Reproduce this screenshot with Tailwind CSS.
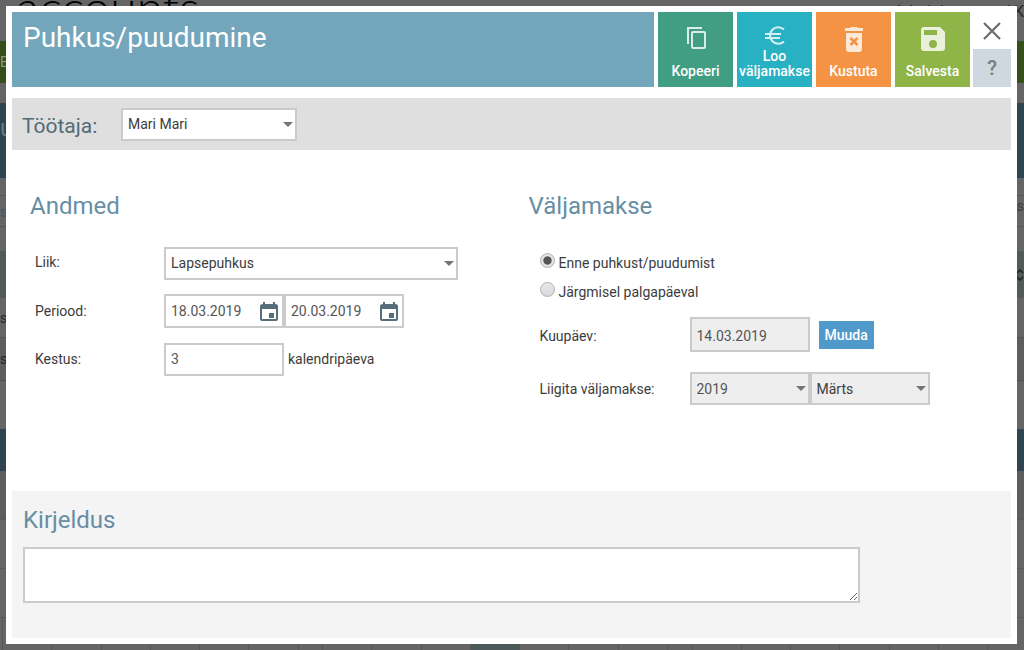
<!DOCTYPE html>
<html lang="et">
<head>
<meta charset="utf-8">
<meta name="viewport" content="width=device-width, initial-scale=1">
<title>Puhkus/puudumine</title>
<script src="https://cdn.jsdelivr.net/npm/@tailwindcss/browser@4"></script>
</head>
<body class="relative min-h-screen overflow-hidden bg-[#656565] font-['Roboto',sans-serif] text-sm text-[#3c3c3c]">

<!-- Dimmed page behind the dialog -->
<div aria-hidden="true" class="absolute inset-0 flex flex-col overflow-hidden text-[#262626]">
  <div class="flex h-[41px] shrink-0 justify-between">
    <div class="-mt-[18px] pl-4 font-['Lato',sans-serif] text-[48px] leading-[50px] font-light text-black">accounts</div>
    <div class="text-base leading-6">Administraator / K</div>
  </div>
  <div class="h-[42px] shrink-0 bg-[#35501b] leading-[42px] text-[#8b9a7c]">E</div>
  <div class="h-5 shrink-0"></div>
  <div class="h-[75px] shrink-0 bg-[#30444f] text-2xl leading-[50px] text-[#607e8c]">u</div>
  <div class="h-[17px] shrink-0"></div>
  <div class="flex h-8 shrink-0 justify-between border-y border-[#555]"><span class="leading-8 text-[#3c5a70]">s</span><span class="leading-5 text-[#3e3e3e]">s</span></div>
  <div class="h-6 shrink-0"></div>
  <div class="flex h-[47px] shrink-0 items-center justify-end bg-[#515a5b]">
    <svg class="h-3 w-2" viewBox="0 0 8 12" fill="none" stroke="#222" stroke-width="1.5"><path d="M1 4l3-3 3 3M1 8l3 3 3-3"/></svg>
  </div>
  <div class="h-10 shrink-0 border-b border-[#535353] leading-10">s</div>
  <div class="h-[43px] shrink-0 border-b border-[#505050] bg-[#5e5e5e] leading-[43px]">s</div>
  <div class="h-12 shrink-0"></div>
  <div class="h-[42px] shrink-0 bg-[#30444f]"></div>
  <div class="h-[49px] shrink-0 border-b border-[#585858] bg-[#5d5d5d]"></div>
  <div class="h-[49px] shrink-0 border-b border-[#595959]"></div>
  <div class="h-[49px] shrink-0 border-b border-[#595959]"></div>
  <div class="grid min-h-8 grow grid-cols-[3px_2fr_2fr_2fr_2fr_2fr_2fr_1fr_2fr_2fr_2fr_2fr_2fr_2fr_2fr_1fr_2fr_2fr_2fr_2fr_2fr_2fr_36px] divide-x divide-[#585858]">
    <i></i><i></i><i></i><i></i><i></i><i></i><i></i><i></i><i></i><i></i><i></i><i class="bg-[#4c5a5c]"></i><i></i><i></i><i></i><i></i><i></i><i></i><i></i><i></i><i></i><i></i><i></i>
  </div>
</div>

<main role="dialog" aria-labelledby="title" class="relative mt-[6px] mr-[7px] mb-[6px] ml-[6px] flex min-h-[calc(100vh-12px)] flex-col bg-white p-[6px]">
  <header class="flex min-h-[75px] gap-[3px]">
    <div class="flex grow gap-1">
      <h1 id="title" class="grow bg-[#73a6bb] px-[11px] pt-2 text-[28px] leading-9 text-white">Puhkus/puudumine</h1>
      <button class="flex w-[75px] flex-col items-center justify-between bg-[#429e83] pt-[11px] pb-2 text-sm leading-[15px] font-medium text-white">
        <svg class="size-8" viewBox="0 0 32 32" fill="none" stroke="#d9ece6" stroke-width="2"><path d="M8 21V5h14"/><rect x="12" y="9" width="13" height="16" rx="1"/></svg>
        Kopeeri
      </button>
      <button class="flex w-[75px] flex-col items-center justify-between bg-[#28b0c3] pt-[11px] pb-2 text-sm leading-[15px] font-medium text-white">
        <svg class="h-6 w-8" viewBox="0 0 32 24" fill="none" stroke="#d4eff3" stroke-width="2"><path d="M25 6.500A8.300 8.300 0 1 0 25 18.500M6 11h16M6 15h15"/></svg>
        <span>Loo<br>väljamakse</span>
      </button>
      <button class="flex w-[75px] flex-col items-center justify-between bg-[#f59345] pt-[11px] pb-2 text-sm leading-[15px] font-medium text-white">
        <svg class="size-8" viewBox="0 0 32 32"><path fill="#fde9da" d="M7 5h5l1-1h6l1 1h5v3H7zM8 10h16v16q0 3-3 3H11q-3 0-3-3z"/><path d="M12.500 15l7 7M19.500 15l-7 7" stroke="#f59345" stroke-width="2.500"/></svg>
        Kustuta
      </button>
      <button class="flex w-[75px] flex-col items-center justify-between bg-[#8fb549] pt-[11px] pb-2 text-sm leading-[15px] font-medium text-white">
        <svg class="size-8" viewBox="0 0 32 32"><path fill="#e9f0db" fill-rule="evenodd" d="M7 4h16l5 5v16q0 3-3 3H7q-3 0-3-3V7q0-3 3-3zM7 7v5h13V7zM16 17a4 4 0 1 0 0 8 4 4 0 1 0 0-8z"/></svg>
        Salvesta
      </button>
    </div>
    <div class="flex w-[38px] flex-col">
      <button aria-label="Sulge" class="flex grow items-center justify-center"><svg class="size-5" viewBox="0 0 20 20" stroke="#6b6b6b" stroke-width="2.200"><path d="M2 2l16 16M18 2L2 18"/></svg></button>
      <button class="h-[38px] bg-[#cfd7df] text-xl font-medium text-[#7b7b7b]">?</button>
    </div>
  </header>

  <section class="mt-[11px] flex min-h-[52px] items-center bg-[#dfdfdf] pl-[10px]">
    <label for="employee" class="w-[99px] pt-1 text-[21px] text-[#536b75]">Töötaja:</label>
    <div class="relative">
      <select id="employee" class="block h-[33px] w-[176px] appearance-none border-2 border-[#cbcbcb] bg-white pl-[5px]"><option>Mari Mari</option></select>
      <svg class="pointer-events-none absolute top-3.5 right-1 h-[5px] w-[10px]" viewBox="0 0 10 5"><path d="M0 0h10L5 5z" fill="#747474"/></svg>
    </div>
  </section>

  <div class="grid grow grid-cols-2 pt-[38px] pb-4">
    <section class="pl-[18px]">
      <h2 class="text-2xl leading-9 text-[#678ea4]">Andmed</h2>
      <div class="mt-[22px] flex flex-col gap-[14px] pl-[5px]">
        <div class="flex h-[34px] items-center">
          <label for="kind" class="w-[129px] pb-[3px]">Liik:</label>
          <div class="relative">
            <select id="kind" class="block h-[33px] w-[294px] appearance-none border-2 border-[#cbcbcb] bg-white pl-[5px]"><option>Lapsepuhkus</option></select>
            <svg class="pointer-events-none absolute top-3.5 right-1 h-[5px] w-[10px]" viewBox="0 0 10 5"><path d="M0 0h10L5 5z" fill="#747474"/></svg>
          </div>
        </div>
        <div class="flex h-[34px] items-center">
          <label for="from" class="w-[129px]">Periood:</label>
          <div class="relative">
            <input id="from" value="18.03.2019" class="block h-[34px] w-[120px] border-2 border-[#cbcbcb] bg-white pl-[5px] text-[#555]">
            <button aria-label="Vali alguskuupäev" class="absolute top-2 right-1.5"><svg class="h-5 w-[18px]" viewBox="0 0 18 20"><path fill="#546e7a" fill-rule="evenodd" d="M3 0h2v2h8V0h2v2q3 0 3 2v13q0 2-2 2H2q-2 0-2-2V4q0-2 3-2zM2 7v10h14V7zM9 11h5v5H9z"/></svg></button>
          </div>
          <div class="relative">
            <input id="to" aria-label="Periood kuni" value="20.03.2019" class="block h-[34px] w-[120px] border-2 border-[#cbcbcb] bg-white pl-[5px] text-[#555]">
            <button aria-label="Vali lõppkuupäev" class="absolute top-2 right-1.5"><svg class="h-5 w-[18px]" viewBox="0 0 18 20"><path fill="#546e7a" fill-rule="evenodd" d="M3 0h2v2h8V0h2v2q3 0 3 2v13q0 2-2 2H2q-2 0-2-2V4q0-2 3-2zM2 7v10h14V7zM9 11h5v5H9z"/></svg></button>
          </div>
        </div>
        <div class="flex h-[34px] items-center">
          <label for="length" class="w-[129px]">Kestus:</label>
          <input id="length" value="3" class="h-[33px] w-[120px] border-2 border-[#cbcbcb] bg-white pl-[5px] text-[#555]">
          <span class="pl-1">kalendripäeva</span>
        </div>
      </div>
    </section>

    <section class="pl-[17px]">
      <h2 class="text-2xl leading-9 text-[#678ea4]">Väljamakse</h2>
      <div class="mt-[22px] pl-[11px]">
        <label class="flex h-[29px] items-start gap-1"><input type="radio" name="payout" checked class="mt-[7px] size-[15px] appearance-none rounded-full border border-[#b0b0b0] bg-[#ddd] bg-radial from-[#555] from-40% to-[#e4e4e4] to-50%"><span class="pt-[7px] leading-5">Enne puhkust/puudumist</span></label>
        <label class="flex h-[29px] items-start gap-1"><input type="radio" name="payout" class="mt-[7px] size-[15px] appearance-none rounded-full border border-[#b0b0b0] bg-linear-to-b from-[#e8e8e8] to-[#d8d8d8]"><span class="pt-[7px] leading-5">Järgmisel palgapäeval</span></label>
        <div class="mt-[13px] flex items-center">
          <label for="date" class="w-[150px] pt-[3px]">Kuupäev:</label>
          <input id="date" value="14.03.2019" readonly class="h-[35px] w-[120px] border-2 border-[#cbcbcb] bg-[#eee] pt-[3px] pl-[5px] text-[#555]">
          <button class="ml-[9px] h-7 bg-[#5099cb] px-[6px] font-medium text-white">Muuda</button>
        </div>
        <div class="mt-5 flex items-center">
          <label for="year" class="w-[150px]">Liigita väljamakse:</label>
          <div class="relative">
            <select id="year" class="block h-[33px] w-[120px] appearance-none border-2 border-[#cbcbcb] bg-[#eee] pl-[5px] text-[#555]"><option>2019</option></select>
            <svg class="pointer-events-none absolute top-3.5 right-1 h-[5px] w-[10px]" viewBox="0 0 10 5"><path d="M0 0h10L5 5z" fill="#747474"/></svg>
          </div>
          <div class="relative">
            <select aria-label="Kuu" class="block h-[33px] w-[120px] appearance-none border-2 border-[#cbcbcb] bg-[#eee] pl-[5px]"><option>Märts</option></select>
            <svg class="pointer-events-none absolute top-3.5 right-1 h-[5px] w-[10px]" viewBox="0 0 10 5"><path d="M0 0h10L5 5z" fill="#747474"/></svg>
          </div>
        </div>
      </div>
    </section>
  </div>

  <section class="bg-[#f4f4f4] px-[11px] pt-[11px] pb-[35px]">
    <h2 class="text-2xl leading-9 text-[#678ea4]"><label for="description">Kirjeldus</label></h2>
    <textarea id="description" class="mt-[9px] block h-14 w-6/7 border-2 border-[#cbcbcb] bg-white"></textarea>
  </section>
</main>
</body>
</html>
